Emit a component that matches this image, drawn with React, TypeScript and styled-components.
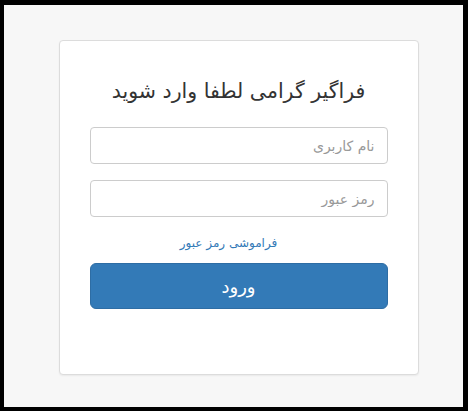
import React from 'react';
import styled, { createGlobalStyle } from 'styled-components';

const GlobalStyle = createGlobalStyle`
    html, body {
        margin: 0;
        padding: 0;
        background: #000;
    }
    body {
        font-family: "DejaVu Sans", "Noto Sans", sans-serif;
    }
`;

const Frame = styled.div`
    box-sizing: border-box;
    margin: 5px 0 0 4px;
    width: 459px;
    height: 402px;
    background-color: #f7f7f7;
    padding-top: 35px;
    display: flex;
    justify-content: center;
    align-items: flex-start;
    direction: rtl;
`;

const Card = styled.div`
    box-sizing: border-box;
    width: 360px;
    height: 335px;
    margin-left: 10px;
    background: #fff;
    border: 1px solid #dcdcdc;
    border-radius: 4px;
    box-shadow: 0 1px 2px rgba(0, 0, 0, 0.06);
    padding: 36px 30px 0;
    display: flex;
    flex-direction: column;
`;

const Title = styled.h2`
    margin: 0 0 22px;
    font-size: 20.5px;
    font-weight: normal;
    color: #333;
    text-align: center;
    line-height: 28px;
`;

const Field = styled.input`
    box-sizing: border-box;
    width: 100%;
    height: 37px;
    margin-bottom: 16px;
    padding: 6px 12px;
    border: 1px solid #ccc;
    border-radius: 4px;
    font-family: inherit;
    font-size: 14px;
    color: #555;
    direction: rtl;
    outline: none;
    &::placeholder {
        color: #999;
    }
`;

const ForgotRow = styled.div`
    text-align: center;
    padding-right: 20px;
    margin: 2px 0 12px;
    font-size: 12px;
    line-height: 16px;
`;

const ForgotLink = styled.a`
    color: #337ab7;
    text-decoration: none;
`;

const SubmitButton = styled.button`
    box-sizing: border-box;
    width: 100%;
    height: 46px;
    border: 1px solid #2e6da4;
    border-radius: 6px;
    background-color: #337ab7;
    color: #fff;
    font-family: inherit;
    font-size: 18px;
    cursor: pointer;
`;

function App() {
    const [user, setUser] = React.useState('');
    const [pass, setPass] = React.useState('');

    return (
        <>
            <GlobalStyle />
            <Frame>
                <Card>
                    <Title>فراگیر گرامی لطفا وارد شوید</Title>
                    <Field
                        type="text"
                        placeholder="نام کاربری"
                        value={user}
                        onChange={(e) => setUser(e.target.value)}
                    />
                    <Field
                        type="password"
                        placeholder="رمز عبور"
                        value={pass}
                        onChange={(e) => setPass(e.target.value)}
                    />
                    <ForgotRow>
                        <ForgotLink href="#">فراموشی رمز عبور</ForgotLink>
                    </ForgotRow>
                    <SubmitButton type="button">ورود</SubmitButton>
                </Card>
            </Frame>
        </>
    );
}

export default App;
